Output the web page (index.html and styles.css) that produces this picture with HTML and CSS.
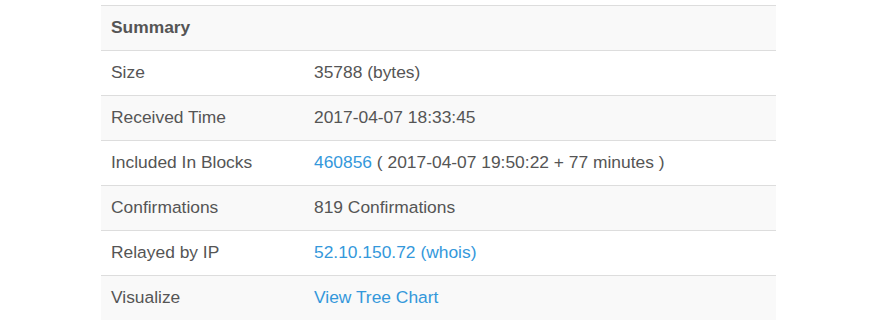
FILE: index.html
```html
<!DOCTYPE html>
<html>
<head>
<meta charset="utf-8">
<link rel="stylesheet" href="styles.css">
</head>
<body>
<div class="wrap">
  <table class="summary">
    <thead>
      <tr><th class="label">Summary</th><th></th></tr>
    </thead>
    <tbody>
      <tr><td class="label">Size</td><td>35788 (bytes)</td></tr>
      <tr><td class="label">Received Time</td><td>2017-04-07 18:33:45</td></tr>
      <tr><td class="label">Included In Blocks</td><td><a href="#">460856</a> ( 2017-04-07 19:50:22 + 77 minutes )</td></tr>
      <tr><td class="label">Confirmations</td><td>819 Confirmations</td></tr>
      <tr><td class="label">Relayed by IP</td><td><a href="#">52.10.150.72</a> <a href="#">(whois)</a></td></tr>
      <tr><td class="label">Visualize</td><td><a href="#">View Tree Chart</a></td></tr>
    </tbody>
  </table>
</div>
</body>
</html>
```
FILE: styles.css
```css
html, body {
  margin: 0;
  padding: 0;
  background: #fff;
}
body {
  font-family: "Liberation Sans", Arial, sans-serif;
  font-size: 17.4px;
  color: #555;
}
.wrap {
  padding: 5px 101px 0 101px;
}
.summary {
  width: 675px;
  table-layout: fixed;
  border-collapse: collapse;
  border-spacing: 0;
}
.summary th,
.summary td {
  padding: 11px 10px 13px 10px;
  line-height: 20px;
  text-align: left;
  vertical-align: top;
  border-top: 1px solid #ddd;
  white-space: nowrap;
}
.summary th {
  font-weight: bold;
  background: #f9f9f9;
}
.summary .label {
  width: 183px;
}
.summary tbody tr:nth-child(even) td {
  background: #f9f9f9;
}
.summary a {
  color: #3498db;
  text-decoration: none;
}
```
